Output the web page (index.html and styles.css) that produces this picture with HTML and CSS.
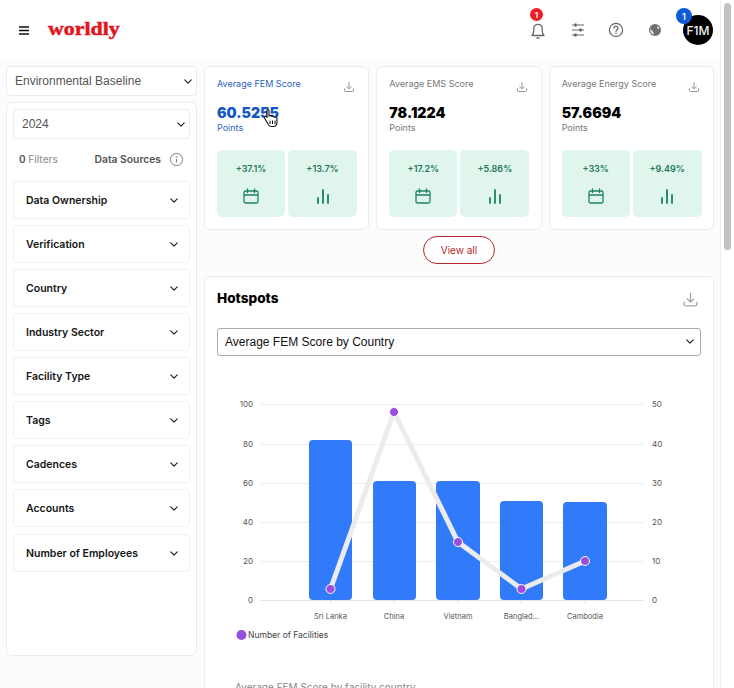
FILE: index.html
```html
<!DOCTYPE html>
<html lang="en">
<head>
    <meta charset="UTF-8">
    <meta name="viewport" content="width=device-width, initial-scale=1.0">
    <title>Worldly</title>
    <link rel="stylesheet" href="styles.css">
</head>
<body>
    <svg class="icon-defs" width="0" height="0">
        <symbol id="chev" viewBox="0 0 10 6"><path d="M1 1l4 4 4-4" fill="none" stroke="currentColor" stroke-width="1.5" stroke-linecap="round" stroke-linejoin="round"/></symbol>
        <symbol id="download" viewBox="0 0 16 16"><path d="M8 2v8M5 7.500L8 10.500l3-3M2 10.500v2a1.500 1.500 0 0 0 1.500 1.500h9a1.500 1.500 0 0 0 1.500-1.500v-2" fill="none" stroke="currentColor" stroke-width="1.200" stroke-linecap="round" stroke-linejoin="round"/></symbol>
        <symbol id="calendar" viewBox="0 0 16 16"><path d="M1 4.500A1.500 1.500 0 0 1 2.500 3h11A1.500 1.500 0 0 1 15 4.500v9a1.500 1.500 0 0 1-1.500 1.500h-11A1.500 1.500 0 0 1 1 13.500zM1 7h14M4.500 1v3.500M11.500 1v3.500" fill="none" stroke="currentColor" stroke-width="1.300" stroke-linecap="round"/></symbol>
        <symbol id="bars" viewBox="0 0 16 16"><path d="M3 10v5M8 2v13M13 7v8" fill="none" stroke="currentColor" stroke-width="1.800" stroke-linecap="round"/></symbol>
    </svg>

    <div class="page">
        <div class="page-body">
            <!-- Top bar -->
            <header class="topbar">
                <div class="brand">
                    <svg class="menu-icon" viewBox="0 0 10 9"><path d="M0 1h10M0 4.500h10M0 8h10" stroke="#111" stroke-width="1.400"/></svg>
                    <span class="logo">worldly</span>
                </div>
                <div class="tools">
                    <div class="tool">
                        <svg viewBox="0 0 20 20"><path d="M4 15.500c1.200-1.200 1.800-2.500 1.800-5V8.500a4.200 4.200 0 0 1 8.400 0v2c0 2.500.6 3.800 1.800 5zM9 18h2" fill="none" stroke="#666" stroke-width="1.300" stroke-linejoin="round" stroke-linecap="round"/></svg>
                        <span class="badge badge-red">1</span>
                    </div>
                    <div class="tool">
                        <svg viewBox="0 0 20 20"><path d="M5 5h12M5 10h12M5 15h12" stroke="#666" stroke-width="1.200"/><path d="M8.500 3.500v3M13.500 8.500v3M8.500 13.500v3" stroke="#555" stroke-width="2"/></svg>
                    </div>
                    <div class="tool">
                        <svg viewBox="0 0 20 20"><circle cx="10" cy="10" r="6.600" fill="none" stroke="#666" stroke-width="1.200"/><path d="M8 8.200a2 2 0 1 1 3 1.700c-.7.400-1 .8-1 1.500" fill="none" stroke="#666" stroke-width="1.200" stroke-linecap="round"/><circle cx="10" cy="13.400" r=".8" fill="#666"/></svg>
                    </div>
                    <div class="tool">
                        <svg viewBox="0 0 20 20"><circle cx="10" cy="10" r="6" fill="#6f6f6f"/><path d="M8 5.600C6.400 6.300 5.200 7.500 5 9c.8.900 2 1 2.500 2 .3.800 1.200 1.100 1.100 2.300 0 .7-.2 1.200 0 1.400-2-.4-3.500-2.500-3.500-4.700 0-2 1.200-3.800 2.900-4.400zM12.200 6c1 .5 1.900 1.500 2.300 2.700l-1.400.4c-.6-.5-1-1.700-.9-3.100z" fill="#e9e9e9"/></svg>
                    </div>
                    <div class="avatar">
                        F1M
                        <span class="badge badge-blue">1</span>
                    </div>
                </div>
            </header>

            <div class="layout">
                <!-- Filters -->
                <aside class="sidebar">
                    <div class="picker picker-top">
                        <span>Environmental Baseline</span>
                        <svg class="chev"><use href="#chev"/></svg>
                    </div>
                    <div class="filter-panel">
                        <div class="picker picker-year">
                            <span>2024</span>
                            <svg class="chev"><use href="#chev"/></svg>
                        </div>
                        <div class="filter-meta">
                            <span class="filter-count"><b>0</b> Filters</span>
                            <span class="sources">Data Sources
                                <svg class="info" viewBox="0 0 16 16"><circle cx="8" cy="8" r="6.500" fill="none" stroke="#777" stroke-width="1"/><path d="M8 7.500v3.500" stroke="#777" stroke-width="1.200"/><circle cx="8" cy="5.200" r=".8" fill="#777"/></svg>
                            </span>
                        </div>
                        <div class="filter-item"><span>Data Ownership</span><svg class="chev"><use href="#chev"/></svg></div>
                        <div class="filter-item"><span>Verification</span><svg class="chev"><use href="#chev"/></svg></div>
                        <div class="filter-item"><span>Country</span><svg class="chev"><use href="#chev"/></svg></div>
                        <div class="filter-item"><span>Industry Sector</span><svg class="chev"><use href="#chev"/></svg></div>
                        <div class="filter-item"><span>Facility Type</span><svg class="chev"><use href="#chev"/></svg></div>
                        <div class="filter-item"><span>Tags</span><svg class="chev"><use href="#chev"/></svg></div>
                        <div class="filter-item"><span>Cadences</span><svg class="chev"><use href="#chev"/></svg></div>
                        <div class="filter-item"><span>Accounts</span><svg class="chev"><use href="#chev"/></svg></div>
                        <div class="filter-item filter-last"><span>Number of Employees</span><svg class="chev"><use href="#chev"/></svg></div>
                    </div>
                </aside>

                <main class="content">
                    <section class="cards">
                        <article class="card card-active">
                            <div class="card-head">
                                <span class="card-title">Average FEM Score</span>
                                <svg class="card-download"><use href="#download"/></svg>
                            </div>
                            <div class="card-value">60.5255</div>
                            <div class="card-unit">Points</div>
                            <div class="stats">
                                <div class="stat"><span>+37.1%</span><svg class="stat-icon"><use href="#calendar"/></svg></div>
                                <div class="stat stat-wide"><span>+13.7%</span><svg class="stat-icon"><use href="#bars"/></svg></div>
                            </div>
                            <!-- mouse pointer caught in the capture -->
                            <svg class="pointer" viewBox="0 0 16 20"><path d="M4.500 1.500c1 0 1.500.7 1.500 1.500v5l1-.3c.8-.2 1.300.2 1.500.6.700-.4 1.500-.2 1.800.4.700-.3 1.500 0 1.700.6.900-.3 2 .2 2 1.400v3.300c0 2.500-1.500 4.500-4 4.500H8.500c-1.500 0-2.300-.7-3-1.800L1.500 10c-.6-1 .5-2.300 1.700-1.500l.8.800V3c0-1 .5-1.500.5-1.500z" fill="#fff" stroke="#111" stroke-width="1.100" stroke-linejoin="round"/><path d="M7 12.500v3.500M9.500 12.500v3.500M12 12.500v3.500" stroke="#111" stroke-width="1"/></svg>
                        </article>
                        <article class="card">
                            <div class="card-head">
                                <span class="card-title">Average EMS Score</span>
                                <svg class="card-download"><use href="#download"/></svg>
                            </div>
                            <div class="card-value">78.1224</div>
                            <div class="card-unit">Points</div>
                            <div class="stats">
                                <div class="stat"><span>+17.2%</span><svg class="stat-icon"><use href="#calendar"/></svg></div>
                                <div class="stat stat-wide"><span>+5.86%</span><svg class="stat-icon"><use href="#bars"/></svg></div>
                            </div>
                        </article>
                        <article class="card">
                            <div class="card-head">
                                <span class="card-title">Average Energy Score</span>
                                <svg class="card-download"><use href="#download"/></svg>
                            </div>
                            <div class="card-value">57.6694</div>
                            <div class="card-unit">Points</div>
                            <div class="stats">
                                <div class="stat"><span>+33%</span><svg class="stat-icon"><use href="#calendar"/></svg></div>
                                <div class="stat stat-wide"><span>+9.49%</span><svg class="stat-icon"><use href="#bars"/></svg></div>
                            </div>
                        </article>
                    </section>

                    <div class="view-all-row"><button class="view-all">View all</button></div>

                    <section class="hotspots">
                        <div class="hotspots-head">
                            <h2>Hotspots</h2>
                            <svg class="hotspots-download"><use href="#download"/></svg>
                        </div>
                        <div class="metric-select">
                            <span>Average FEM Score by Country</span>
                            <svg class="chev"><use href="#chev"/></svg>
                        </div>

                        <!-- viewBox uses page coordinates so the numbers read like the plot -->
                        <svg class="chart" viewBox="205 380 509 270">
                            <g class="grid">
                                <path d="M260 404.500H644M260 444.500H644M260 483.500H644M260 522.500H644M260 561.500H644"/>
                                <path class="axis" d="M260 600.500H644M330.500 600v4M394 600v4M458 600v4M521.500 600v4M585 600v4"/>
                            </g>
                            <g class="ticks ticks-left">
                                <text x="253" y="407">100</text>
                                <text x="253" y="447">80</text>
                                <text x="253" y="486">60</text>
                                <text x="253" y="525">40</text>
                                <text x="253" y="564">20</text>
                                <text x="253" y="603">0</text>
                            </g>
                            <g class="ticks">
                                <text x="652" y="407">50</text>
                                <text x="652" y="447">40</text>
                                <text x="652" y="486">30</text>
                                <text x="652" y="525">20</text>
                                <text x="652" y="564">10</text>
                                <text x="652" y="603">0</text>
                            </g>
                            <g class="bars">
                                <path d="M309 596V444a4 4 0 0 1 4-4h35a4 4 0 0 1 4 4v152a4 4 0 0 1-4 4h-35a4 4 0 0 1-4-4z"/>
                                <path d="M373 596V485a4 4 0 0 1 4-4h35a4 4 0 0 1 4 4v111a4 4 0 0 1-4 4h-35a4 4 0 0 1-4-4z"/>
                                <path d="M436 596V485a4 4 0 0 1 4-4h36a4 4 0 0 1 4 4v111a4 4 0 0 1-4 4h-36a4 4 0 0 1-4-4z"/>
                                <path d="M500 596V505a4 4 0 0 1 4-4h35a4 4 0 0 1 4 4v91a4 4 0 0 1-4 4h-35a4 4 0 0 1-4-4z"/>
                                <path d="M563 596V506a4 4 0 0 1 4-4h36a4 4 0 0 1 4 4v90a4 4 0 0 1-4 4h-36a4 4 0 0 1-4-4z"/>
                            </g>
                            <polyline class="trend" points="330.500,589 394,412 458,542 521.500,589 585,561"/>
                            <g class="dots">
                                <circle cx="330.500" cy="589" r="4.500"/>
                                <circle cx="394" cy="412" r="4.500"/>
                                <circle cx="458" cy="542" r="4.500"/>
                                <circle cx="521.500" cy="589" r="4.500"/>
                                <circle cx="585" cy="561" r="4.500"/>
                            </g>
                            <g class="x-labels">
                                <text x="330.500" y="619">Sri Lanka</text>
                                <text x="394" y="619">China</text>
                                <text x="458" y="619">Vietnam</text>
                                <text x="521.500" y="619">Banglad...</text>
                                <text x="585" y="619">Cambodia</text>
                            </g>
                            <circle class="legend-dot" cx="241.500" cy="635" r="5"/>
                            <text class="legend-text" x="248" y="638">Number of Facilities</text>
                        </svg>

                        <p class="chart-caption">Average FEM Score by facility country</p>
                    </section>
                </main>
            </div>
        </div>

        <!-- Scrollbar -->
        <div class="scroll-track"><div class="scroll-thumb"></div></div>
    </div>
</body>
</html>
```

FILE: styles.css
```css
html, body {
    margin: 0;
    padding: 0;
    height: 688px;
    overflow: hidden;
}

body {
    font-family: Inter, "Liberation Sans", sans-serif;
    background-color: #fff;
    color: #111;
}

.icon-defs {
    display: block;
    height: 0;
}

.page {
    display: flex;
    height: 688px;
}

.page-body {
    width: 721px;
    flex: none;
    background-color: #fcfcfc;
    border-right: 1px solid #eceef0;
    box-sizing: border-box;
    overflow: hidden;
}

/* Top bar */
.topbar {
    display: flex;
    justify-content: space-between;
    align-items: center;
    height: 60px;
    padding: 0 7px 0 19px;
    background-color: #fff;
}

.brand {
    display: flex;
    align-items: center;
    gap: 19px;
}

.menu-icon {
    width: 10px;
    height: 9px;
}

.logo {
    width: 62px;
    padding-bottom: 2px;
    font-family: "Liberation Serif", serif;
    font-weight: bold;
    font-size: 19px;
    line-height: 20px;
    color: #e3141c;
    -webkit-text-stroke: 0.5px #e3141c;
    transform: scaleX(1.15);
    transform-origin: left center;
}

.tools {
    display: flex;
    align-items: center;
    gap: 19px;
}

.tool {
    position: relative;
    width: 20px;
    height: 20px;
}

.tool svg {
    display: block;
    width: 20px;
    height: 20px;
}

.avatar {
    position: relative;
    width: 30px;
    height: 30px;
    margin-left: -1px;
    display: flex;
    align-items: center;
    justify-content: center;
    border-radius: 50%;
    background-color: #000;
    color: #f2f2f2;
    font-size: 12px;
    font-weight: 500;
}

.badge {
    position: absolute;
    display: flex;
    align-items: center;
    justify-content: center;
    border-radius: 50%;
    color: #fff;
    font-weight: 700;
}

.badge-red {
    top: -12px;
    left: 2px;
    width: 13px;
    height: 13px;
    background-color: #ee1c25;
    font-size: 8px;
}

.badge-blue {
    top: -7px;
    left: -7px;
    width: 16px;
    height: 16px;
    background-color: #0f5bd7;
    font-size: 9px;
    font-weight: 600;
}

/* Main layout */
.layout {
    display: flex;
    gap: 7px;
    padding: 6px 5px 0 6px;
}

.sidebar {
    width: 191px;
    flex: none;
}

.picker {
    display: flex;
    justify-content: space-between;
    align-items: center;
    box-sizing: border-box;
    height: 30px;
    background-color: #fff;
    border: 1px solid #e9ebee;
    border-radius: 4px;
    font-family: "Liberation Sans", sans-serif;
    font-size: 12px;
    color: #555;
}

.picker-top {
    padding: 0 4px 0 8px;
}

.picker-year {
    padding: 0 4px 0 8px;
}

.chev {
    width: 8px;
    height: 5px;
    flex: none;
    color: #222;
}

.filter-panel {
    box-sizing: border-box;
    height: 554px;
    margin-top: 6px;
    padding: 6px 6px 0;
    background-color: #fff;
    border: 1px solid #e9ebee;
    border-radius: 6px;
}

.filter-meta {
    display: flex;
    justify-content: space-between;
    align-items: center;
    height: 20px;
    margin: 10px 0 12px;
    padding: 0 6px;
    font-size: 10px;
    font-weight: 500;
}

.filter-count {
    color: #999;
}

.filter-count b {
    color: #555;
    font-weight: 600;
}

.sources {
    display: flex;
    align-items: center;
    gap: 8px;
    color: #555;
    font-size: 10.300px;
    font-weight: 600;
}

.info {
    width: 15px;
    height: 15px;
}

.filter-item {
    display: flex;
    justify-content: space-between;
    align-items: center;
    box-sizing: border-box;
    height: 38px;
    margin-bottom: 6px;
    padding: 0 11px 0 12px;
    background-color: #fff;
    border: 1px solid #eeeff2;
    border-radius: 4px;
    font-size: 10.500px;
    font-weight: 600;
    color: #151515;
}

.filter-last {
    margin-top: 7px;
}

/* Score cards */
.content {
    width: 510px;
    flex: none;
}

.cards {
    display: grid;
    grid-template-columns: repeat(3, minmax(0, 1fr));
    gap: 7px;
}

.card {
    position: relative;
    box-sizing: border-box;
    height: 164px;
    padding: 11px 12px 0;
    background-color: #fff;
    border: 1px solid #e9ebee;
    border-radius: 6px;
}

.card-head {
    display: flex;
    justify-content: space-between;
    height: 12px;
    padding-right: 1px;
}

.card-title {
    font-size: 9px;
    line-height: 11px;
    color: #777;
}

.card-download {
    width: 12px;
    height: 12px;
    margin-top: 3px;
    color: #888;
}

.card-value {
    margin-top: 13px;
    font-size: 14.200px;
    line-height: 20px;
    font-weight: 900;
    color: #000;
}

.card-unit {
    font-size: 9px;
    line-height: 9px;
    color: #777;
}

.card-active .card-title,
.card-active .card-unit {
    color: #2b5fc0;
}

.card-active .card-value {
    color: #1257c6;
}

.stats {
    display: flex;
    gap: 3px;
    margin-top: 18px;
}

.stat {
    width: 68px;
    height: 67px;
    flex: none;
    display: flex;
    flex-direction: column;
    align-items: center;
    padding-top: 13px;
    box-sizing: border-box;
    background-color: #e0f6ec;
    border-radius: 5px;
    font-size: 9px;
    line-height: 12px;
    font-weight: 600;
    color: #22795a;
}

.stat-wide {
    width: 69px;
}

.stat-icon {
    width: 16px;
    height: 16px;
    margin-top: 13px;
    color: #1f8262;
}

.pointer {
    position: absolute;
    top: 41px;
    left: 58px;
    width: 16px;
    height: 20px;
}

.view-all-row {
    display: flex;
    justify-content: center;
    margin: 6px 0 12px;
}

.view-all {
    width: 72px;
    height: 28px;
    padding: 0;
    background-color: #fff;
    border: 1px solid #b5272d;
    border-radius: 14px;
    font-family: Inter, sans-serif;
    font-size: 10px;
    color: #b5272d;
}

/* Hotspots */
.hotspots {
    box-sizing: border-box;
    height: 430px;
    padding: 0 12px;
    background-color: #fff;
    border: 1px solid #e9ebee;
    border-radius: 6px;
}

.hotspots-head {
    display: flex;
    justify-content: space-between;
    align-items: center;
    height: 42px;
    padding-right: 2px;
}

.hotspots-head h2 {
    margin: 0;
    font-size: 13.600px;
    font-weight: 800;
    color: #000;
}

.hotspots-download {
    width: 17px;
    height: 17px;
    margin-top: 3px;
    color: #a3a3a3;
}

.metric-select {
    display: flex;
    justify-content: space-between;
    align-items: center;
    box-sizing: border-box;
    height: 28px;
    margin-top: 9px;
    padding: 0 6px 1px 7px;
    border: 1px solid #aaa;
    border-radius: 3px;
    font-family: "Liberation Sans", sans-serif;
    font-size: 12px;
    color: #111;
}

.chart {
    display: block;
    width: 509px;
    height: 270px;
    margin: 24px -12px 0 -12px;
}

.grid path {
    fill: none;
    stroke: #eceef1;
    stroke-width: 1;
}

.grid .axis {
    stroke: #dfe4ec;
}

.ticks text {
    font-family: Inter, sans-serif;
    font-size: 8px;
    fill: #555;
}

.ticks-left text {
    text-anchor: end;
}

.bars path {
    fill: #317bfa;
}

.trend {
    fill: none;
    stroke: #ececec;
    stroke-width: 5;
    stroke-linejoin: miter;
}

.dots circle {
    fill: #9b4de0;
    stroke: #fff;
    stroke-width: 1;
}

.x-labels text {
    font-family: Inter, sans-serif;
    font-size: 7.500px;
    fill: #555;
    text-anchor: middle;
}

.legend-dot {
    fill: #9b4de0;
}

.legend-text {
    font-family: Inter, sans-serif;
    font-size: 8.500px;
    fill: #444;
}

.chart-caption {
    margin: 31px 0 0 18px;
    font-size: 10px;
    color: #888;
}

/* Scrollbar */
.scroll-track {
    flex: 1;
    padding: 3px 3px 0 3px;
    background-color: #fff;
}

.scroll-thumb {
    height: 247px;
    background-color: #c2c2c2;
    border-radius: 4px;
}
```
